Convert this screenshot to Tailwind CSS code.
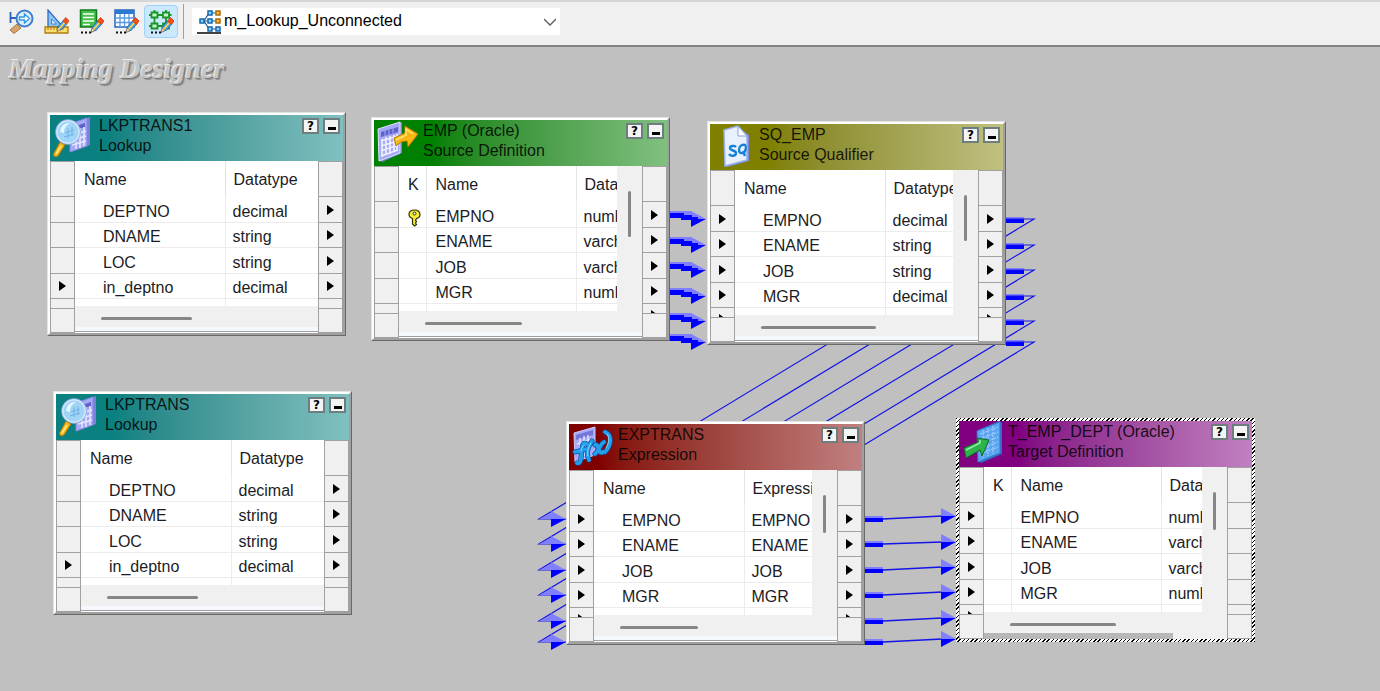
<!DOCTYPE html>
<html lang="en">
<head>
<meta charset="utf-8">
<title>Mapping Designer</title>
<script src="https://cdn.jsdelivr.net/npm/@tailwindcss/browser@4"></script>
</head>
<body class="flex min-h-screen flex-col bg-[#c0c0c0] font-['Liberation_Sans',Arial,sans-serif] text-base text-[#1c1c24]">

<!-- Shared symbols -->
<svg class="hidden" aria-hidden="true">
  <symbol id="pencil" viewBox="0 0 14 16">
    <path d="M1 15.500l1-5 3.500 3z" fill="#f3d9a4" stroke="#333" stroke-width=".6"/>
    <path d="M2 10.500l5.500-6.500 4 3.500-6 6.500z" fill="#4aa3e8" stroke="#1d5fae" stroke-width=".8"/>
    <path d="M3.500 12.500l6-7" stroke="#ffd23c" stroke-width="1.800"/>
    <path d="M7.500 4l3-3.500L14 4l-2.500 3.500z" fill="#f4511e" stroke="#d23a0d" stroke-width=".9"/>
  </symbol>
  <symbol id="icon-lookup" viewBox="0 0 42 44">
    <path d="M20 8l18-6v28L19 37z" fill="#7d7fdc"/>
    <path d="M18 9l17-6v28L18 37z" fill="#a6a9f5" stroke="#8588de"/>
    <path d="M21 12l12-4v4l-12 4z" fill="#5f62c8"/>
    <path d="M20 20l14-4M20 25l14-4M20 30l14-4M24 14v20M28 13v20M32 12v19" stroke="#e6e8ff" stroke-width="1.500"/>
    <path d="M8 27l5 3-7 11c-2 2-6 0-4-3z" fill="#f4b81c" stroke="#a97708"/>
    <path d="M9 31l-5 8" stroke="#ffe88a" stroke-width="1.500"/>
    <circle cx="16" cy="17" r="11.500" fill="#9fd6f7" stroke="#d5e6fb" stroke-width="2"/>
    <circle cx="16" cy="17" r="12.500" fill="none" stroke="#6e95d8" stroke-width=".7"/>
    <path d="M8 17a9 9 0 0 1 10-9c-5 3-6 6-6 10z" fill="#fff" opacity=".75"/>
    <path d="M12 22l10-3M13 18l9-3M16 13v10M20 12v9" stroke="#4c8fd6" stroke-width=".9" opacity=".6"/>
  </symbol>
  <symbol id="icon-source" viewBox="0 0 42 44">
    <path d="M4 9L26 2v31L6 42l-3-2z" fill="#7d7fdc"/>
    <path d="M2 9L24 2v31L3 41z" fill="#a6a9f5" stroke="#dfe1ff"/>
    <path d="M5 12l17-5v5L5 17z" fill="#5f62c8"/>
    <path d="M9 11v5M13 10v5M17 8v5" stroke="#a6a9f5"/>
    <path d="M5 21l17-5M5 26l17-5M5 31l17-6M5 36l17-6M6 19v18M10 17v18M14 16v18M18 15v17M21 14v17" stroke="#eef0ff" stroke-width="1.700"/>
    <path d="M18 18l11-5V6l13 8-10 13-1-6c-5 0-8 2-11 5z" fill="#f9b811" stroke="#b87a05"/>
    <path d="M20 20l10-5V9l7 5" stroke="#ffe27a" stroke-width="1.500" fill="none"/>
  </symbol>
  <symbol id="icon-sq" viewBox="0 0 42 44">
    <path d="M13 7l13-4 11 8v26l-22 6-2-2z" fill="#7d8bd8"/>
    <path d="M12 6l14-4 9 10v24l-22 6z" fill="#e9f1ff" stroke="#9bb0ee" stroke-width="1.500"/>
    <path d="M26 2v10h9z" fill="#fff" stroke="#8a9de0"/>
    <path d="M24 23c-2-2-6-1-6 1 0 3 6 2 6 5 0 3-5 4-7 1M33 21c-4-1-6 2-6 5 0 4 5 4 6 1 1-2 1-5 0-6zM31 27l2 5" fill="none" stroke="#1481d6" stroke-width="2.400"/>
  </symbol>
  <symbol id="icon-expr" viewBox="0 0 42 44">
    <path d="M3 9L24 3v28L4 38z" fill="#a6a9f5" stroke="#c9cbff"/>
    <path d="M5 11l17-5v5L5 16z" fill="#7477da"/>
    <path d="M6 20l16-5M6 25l16-5M9 14v20M13 12v20M17 11v20" stroke="#e2e4ff" stroke-width="1.500"/>
    <g fill="none" stroke-linecap="round">
      <path d="M6 39c5 2 4-9 5-14 0-5 2-7 5-5M4 28l11-3M21 17c-5 7-6 13-3 19M24 21c4-3 3 11 8 7M33 18c-4 2-5 9-9 12M34 8c8 3 6 14 0 20" stroke="#0b4fa0" stroke-width="5"/>
      <path d="M6 39c5 2 4-9 5-14 0-5 2-7 5-5M4 28l11-3M21 17c-5 7-6 13-3 19M24 21c4-3 3 11 8 7M33 18c-4 2-5 9-9 12M34 8c8 3 6 14 0 20" stroke="#23a0ec" stroke-width="3.600"/>
      <path d="M10 27c1-4 2-6 4-6M20 19c-3 5-4 9-3 13M36 10c3 3 2 9-1 14" stroke="#8fd8ff" stroke-width="1"/>
    </g>
  </symbol>
  <symbol id="icon-target" viewBox="0 0 42 44">
    <path d="M17 9L38 0l3 2v31L20 42l-3-2z" fill="#2f6cc0"/>
    <path d="M16 10L39 1v31L17 41z" fill="#5aa4f0" stroke="#3a7bd2"/>
    <path d="M19 13l18-7M19 18l18-7M19 23l18-7M19 28l18-7M19 33l18-7M22 9v28M27 7v28M32 5v28" stroke="#9ccbff" stroke-width="1.300" stroke-dasharray="2 1"/>
    <path d="M3 27l14-6-1-4 12 2-7 16-2-6-14 8z" fill="#2cb34a" stroke="#0d6a28" stroke-linejoin="round"/>
    <path d="M5 29l14-7v-3" stroke="#98eba6" stroke-width="1.500" fill="none"/>
  </symbol>
</svg>

<header class="flex h-[47px] items-center border-t-2 border-b-2 border-t-[#d6d6d6] border-b-[#828282] bg-[#f0f0f0] pb-1 pl-1">
  <nav class="flex items-center gap-px" aria-label="Designer tools">
    <button type="button" aria-label="Source Analyzer" class="flex h-[33px] w-[34px] items-center justify-center">
      <svg class="size-[25px]" viewBox="0 0 25 25">
        <path d="M1.500 3v11M1.500 9h6" stroke="#2b62b8" stroke-width="1.800"/>
        <path d="M8 15l4 4-7 5.500L1 21z" fill="#d9a46a" stroke="#8e6638" stroke-width=".8"/>
        <circle cx="15.500" cy="9.500" r="8" fill="#d9effd" stroke="#3f7cc9" stroke-width="2"/>
        <path d="M10.500 8h5V5l5 4.500-5 4.500v-3h-5z" fill="#fff" stroke="#3497e0" stroke-width="1.400"/>
      </svg>
    </button>
    <button type="button" aria-label="Target Designer" class="flex h-[33px] w-[34px] items-center justify-center">
      <svg class="size-[25px]" viewBox="0 0 25 25">
        <path d="M4 1v17h15z" fill="#8cc4f5" stroke="#2d6ec0" stroke-width="1.300"/>
        <path d="M7.500 10v5h5z" fill="#d8ecfd" stroke="#2d6ec0" stroke-width=".8"/>
        <path d="M1 18h23v6H1z" fill="#fbdc6c" stroke="#ad7c12" stroke-width="1.300"/>
        <path d="M4 18v3M7 18v3M10 18v3M13 18v3M16 18v3M19 18v3" stroke="#ad7c12"/>
        <use href="#pencil" x="12" y="8" width="13" height="15"/>
      </svg>
    </button>
    <button type="button" aria-label="Transformation Developer" class="flex h-[33px] w-[34px] items-center justify-center">
      <svg class="size-[25px]" viewBox="0 0 25 25">
        <path d="M1.500 1h16v17h-16z" fill="#45c04a" stroke="#127a1c" stroke-width="1.500"/>
        <path d="M4 5h11M4 8.500h11M4 12h11M4 15.500h7" stroke="#fff" stroke-width="1.400"/>
        <path d="M2 23.500h2M6 23.500h2M10 23.500h2" stroke="#111" stroke-width="1.800"/>
        <use href="#pencil" x="11" y="8" width="14" height="16"/>
      </svg>
    </button>
    <button type="button" aria-label="Mapplet Designer" class="flex h-[33px] w-[34px] items-center justify-center">
      <svg class="size-[25px]" viewBox="0 0 25 25">
        <path d="M1 1h19v17H1z" fill="#fff" stroke="#2464bb" stroke-width="1.500"/>
        <path d="M1 1h19v4H1z" fill="#2d78d2"/>
        <path d="M1 9h19M1 13.500h19M6 5v13M10.500 5v13M15 5v13" stroke="#5c9ae0" stroke-width="1.300"/>
        <path d="M2 23.500h2M6 23.500h2M10 23.500h2" stroke="#111" stroke-width="1.800"/>
        <use href="#pencil" x="11" y="8" width="14" height="16"/>
      </svg>
    </button>
    <button type="button" aria-label="Mapping Designer" aria-pressed="true" class="flex h-[33px] w-[34px] items-center justify-center rounded-sm border border-[#9fd2fb] bg-[#cce8ff]">
      <svg class="size-[25px]" viewBox="0 0 25 25">
        <g fill="#c9f3cb" stroke="#18962a" stroke-width="1.800">
          <path d="M2.500 3.500h6v5h-6zM14 3.500h6v5h-6zM2.500 14.500h6v5h-6zM14 14.500h6v5h-6z"/>
          <path d="M5.500 1v2M17 1v2M5.500 9v5M17 9v5M0 6h2M9 6h5M20 6h2.500M0 17h2M9 17h5" fill="none"/>
        </g>
        <path d="M2 23.500h2M6 23.500h2M10 23.500h2" stroke="#111" stroke-width="1.800"/>
        <use href="#pencil" x="11" y="8" width="14" height="16"/>
      </svg>
    </button>
  </nav>
  <div class="mr-2 ml-[5px] h-[35px] w-px bg-[#a0a0a0]"></div>
  <div class="flex h-[27px] w-[368px] items-center bg-white pr-1 pl-[5px]">
    <svg class="size-[25px] shrink-0" viewBox="0 0 25 25" aria-hidden="true">
      <path d="M5 12h14M7 12l5-8h8M7 12l5 8h8" stroke="#1b5c9c" stroke-width="1.200" fill="none"/>
      <g fill="#8fd4ff" stroke="#1568b0" stroke-width="1.500">
        <path d="M3 10h4v4H3zM11 2h4v4h-4zM11 10h4v4h-4zM11 18h4v4h-4zM19 18h4v4h-4z"/>
      </g>
      <path d="M19 2h4v4h-4zM19 10h4v4h-4z" fill="#ffc23c" stroke="#a86c06" stroke-width="1.500"/>
      <path d="M0 24h24" stroke="#111" stroke-width="1.600"/>
    </svg>
    <label for="mapping" class="sr-only">Mapping</label>
    <select id="mapping" class="h-[27px] flex-1 appearance-none bg-transparent pb-0.5 pl-0.5 leading-6 text-black outline-none">
      <option>m_Lookup_Unconnected</option>
    </select>
    <svg class="h-2 w-3 shrink-0" viewBox="0 0 12 8" fill="none" stroke="#606060" stroke-width="1.400" aria-hidden="true"><path d="M0 1l6 6 6-6"/></svg>
  </div>
</header>

<main id="canvas" class="relative flex-1 overflow-hidden">
  <h1 class="px-[9px] pt-1.5 font-['Liberation_Serif',serif] text-[28px] leading-8 font-bold text-[#c6c6c6] italic [text-shadow:-1px_-1px_0_#ececec,1px_1px_0_#7c7c7c,2px_2px_1px_#909090]">Mapping Designer</h1>
  <svg id="links" class="absolute inset-0 size-full overflow-visible" aria-hidden="true"></svg>
</main>

<script>
const lookupRows = [['DEPTNO', 'decimal'], ['DNAME', 'string'], ['LOC', 'string'], ['in_deptno', 'decimal']];
const lookup = { type: 'Lookup', icon: 'icon-lookup', fill: 'bg-linear-to-r from-[#0b8080] from-20% to-[#80c0c0]', cols: ['Name', 'Datatype'], rows: lookupRows, ins: [3], outs: [0, 1, 2, 3], thumb: 'w-[91px]' };
const all = [0, 1, 2, 3, 4];
const empRows = [['', 'EMPNO', 'number(p,s)'], ['', 'ENAME', 'varchar2'], ['', 'JOB', 'varchar2'], ['', 'MGR', 'number(p,s)']];

const nodes = [
  { ...lookup, name: 'LKPTRANS1', at: 'left-[47px] top-[65px]' },
  { name: 'EMP (Oracle)', type: 'Source Definition', icon: 'icon-source', at: 'left-[371px] top-[70px]', fill: 'bg-linear-to-r from-[#008000] from-20% to-[#80c080]',
    cols: ['K', 'Name', 'Datatype'], rows: empRows, key: true, ins: [], outs: all, thumb: 'w-[97px]', vthumb: 'h-[46px]' },
  { name: 'SQ_EMP', type: 'Source Qualifier', icon: 'icon-sq', at: 'left-[707px] top-[74px]', fill: 'bg-linear-to-r from-[#808000] from-20% to-[#c0c080]',
    cols: ['Name', 'Datatype'], rows: [['EMPNO', 'decimal'], ['ENAME', 'string'], ['JOB', 'string'], ['MGR', 'decimal']], ins: all, outs: all, thumb: 'w-[115px]', vthumb: 'h-[46px]' },
  { ...lookup, name: 'LKPTRANS', at: 'left-[53px] top-[344px]' },
  { name: 'EXPTRANS', type: 'Expression', icon: 'icon-expr', at: 'left-[566px] top-[374px]', fill: 'bg-linear-to-r from-[#800000] from-10% to-[#c08080]',
    cols: ['Name', 'Expression'], rows: [['EMPNO', 'EMPNO'], ['ENAME', 'ENAME'], ['JOB', 'JOB'], ['MGR', 'MGR']], ins: all, outs: all, thumb: 'w-[78px]', vthumb: 'h-[38px]' },
  { name: 'T_EMP_DEPT (Oracle)', type: 'Target Definition', icon: 'icon-target', at: 'left-[956px] top-[371px]', fill: 'bg-linear-to-r from-[#800080] from-20% to-[#c080c0]',
    cols: ['K', 'Name', 'Datatype'], rows: empRows, ins: all, outs: [], thumb: 'w-[106px]', vthumb: 'h-[38px]', selected: true },
];

const rowHeight = ['h-[26px]', 'h-[25px]', 'h-[26px]', 'h-[25px]'];
const arrow = '<svg class="h-[10px] w-[7px] shrink-0" viewBox="0 0 7 10"><path d="M0 0l7 5-7 5z"/></svg>';
const keyIcon = '<svg class="h-[18px] w-[13px]" viewBox="0 0 13 18" role="img" aria-label="Primary key"><path d="M6.500 1C3 1 1 3 1 5.500S3 9 4.500 9.500V15L6.500 17 8.500 15.500 7.500 14l1-1.500-1-1 1-2C10.500 9 12 8 12 5.500S10 1 6.500 1z" fill="#f4ee35" stroke="#33300a" stroke-width="1.200"/><circle cx="6.500" cy="4.500" r="1.500" fill="#fff" stroke="#33300a"/></svg>';

function ports(active) {
  const cell = 'flex justify-center border-t border-[#a0a0a0] ';
  return `<div class="flex w-[25px] shrink-0 flex-col border-x border-[#a0a0a0] bg-[#f0f0f0]">
    <div class="${cell}h-[35px]"></div>
    ${rowHeight.map((h, i) => `<div class="${cell}${h} items-center">${active.includes(i) ? arrow : ''}</div>`).join('')}
    <div class="${cell}h-[10px] overflow-hidden pt-[6px]">${active.includes(4) ? arrow : ''}</div>
    <div class="${cell}flex-1 border-b"></div>
  </div>`;
}

function table(n) {
  const hasKey = n.cols.length === 3;
  const kc = hasKey ? 1 : 0;
  return `<table class="w-full table-fixed border-collapse text-left whitespace-nowrap">
    <colgroup>${hasKey ? '<col class="w-[27px]">' : ''}<col class="w-[150px]"><col></colgroup>
    <thead><tr class="h-[35px]">${n.cols.map((c, i) =>
      `<th class="overflow-hidden p-0 pt-0.5 font-normal ${i < n.cols.length - 1 ? 'border-r border-[#e4e4e4] pl-[9px]' : 'pl-2'}">${c}</th>`).join('')}</tr></thead>
    <tbody>${n.rows.map((r, ri) => `<tr class="${rowHeight[ri]} border-b border-[#ececec]">${r.map((c, i) =>
      `<td class="overflow-hidden p-0 align-bottom leading-5 ${i < r.length - 1 ? 'border-r border-[#ececec]' : ''} ${i === kc ? (hasKey ? 'pl-[9px]' : 'pl-7') : i < kc ? 'pl-[9px]' : 'pl-[7px]'}">${hasKey && i === 0 && ri === 0 && n.key ? keyIcon : c}</td>`).join('')}</tr>`).join('')}
      <tr class="h-[8px]">${n.cols.map((c, i) => `<td class="p-0 ${i < n.cols.length - 1 ? 'border-r border-[#ececec]' : ''}"></td>`).join('')}</tr>
    </tbody></table>`;
}

function win(n) {
  const btn = 'flex h-4 w-[17px] justify-center border-2 border-[#6e7d7d] bg-[#f4f4f4] text-black';
  const frame = n.selected
    ? 'p-[3px] bg-[repeating-linear-gradient(135deg,#000_0_1px,#fff_1px_3px)]'
    : 'border border-t-[#e3e3e3] border-l-[#e3e3e3] border-r-[#696969] border-b-[#696969]';
  const inner = n.selected ? '' : 'border-2 border-t-white border-l-white border-r-[#a0a0a0] border-b-[#a0a0a0]';
  return `<section class="absolute w-[299px] ${n.at} ${frame}" aria-label="${n.name}"><div class="${inner}">
    <header class="flex h-[46px] ${n.fill}">
      <svg class="ml-0.5 h-[44px] w-[42px] shrink-0"><use href="#${n.icon}"/></svg>
      <div class="ml-[5px] flex-1 pt-px leading-5 whitespace-nowrap text-black/85"><h2>${n.name}</h2><p>${n.type}</p></div>
      <div class="flex gap-1 pt-[3px] pr-[3px]">
        <button type="button" aria-label="Help" class="${btn} items-center font-['DejaVu_Sans'] text-xs leading-3 font-bold">?</button>
        <button type="button" aria-label="Minimize" class="${btn} items-end pb-[2px]"><span class="h-[3px] w-2 bg-black"></span></button>
      </div>
    </header>
    <div class="flex h-[172px]">
      ${ports(n.ins)}
      <div class="flex min-w-0 flex-1 flex-col bg-[#f0f0f0]">
        <div class="flex h-[145px] overflow-hidden">
          <div class="min-w-0 flex-1 overflow-hidden bg-white">${table(n)}</div>
          ${n.vthumb ? `<div class="flex w-[25px] shrink-0 justify-center pt-[25px]"><div class="w-[3px] rounded-full bg-[#868686] ${n.vthumb}"></div></div>` : ''}
        </div>
        <div class="flex-1 pt-[11px] pl-[26px]"><div class="h-[3px] rounded-full bg-[#868686] ${n.thumb}"></div></div>
        ${n.selected ? '<div class="h-[6px] w-[189px] bg-[#b8b8b8]"></div>' : '<div class="h-1 bg-[#f5f9fd]"></div><div class="h-[2px] border-t border-[#a0a0a0] bg-white"></div>'}
      </div>
      ${ports(n.outs)}
    </div></div>
  </section>`;
}

// Connector geometry is in window coordinates; the group shifts it below the toolbar.
const from = [219, 245, 270, 296, 321, 342];
const mid = [519, 544, 570, 595, 621, 642];
const to = [516, 542, 567, 592, 618, 639];
const head = (x, y) => `<path d="M${x - 15} ${y - 8}L${x} ${y}H${x - 15}z" fill="#7f7fff"/><path d="M${x - 15} ${y}H${x}L${x - 15} ${y + 8}z" fill="#0000ff"/>`;
const stub = (x, y) => `<path d="M${x} ${y - 3}h18v3h-18z" fill="#7f7fff"/><path d="M${x} ${y - 1}h18v4h-18z" fill="#0000ff"/>`;
let links = '';
from.forEach((y, i) => {
  links += head(706, y) + `<path d="M670 ${y - 8}h22v5h-22z" fill="#7f7fff"/><path d="M670 ${y - 6}h14v2h8v2h6v3h-17v-2h-11z" fill="#0000ff"/>`;
  links += stub(1006, y + 1) + `<path d="M1006 ${y}H1034L539 ${mid[i]}H566" fill="none" stroke="#1414e6" stroke-width="1.200"/>`;
  links += `<path d="M539 ${mid[i]}l12-6v6z" fill="#7f7fff"/>` + head(566, mid[i]) + stub(865, mid[i]);
  links += `<path d="M883 ${mid[i]}L942 ${to[i]}" stroke="#1414e6" stroke-width="1.300"/>` + head(956, to[i]);
});
document.getElementById('links').innerHTML = `<g transform="translate(0 -47)">${links}</g>`;
document.getElementById('canvas').insertAdjacentHTML('beforeend', nodes.map(win).join(''));
</script>
</body>
</html>
